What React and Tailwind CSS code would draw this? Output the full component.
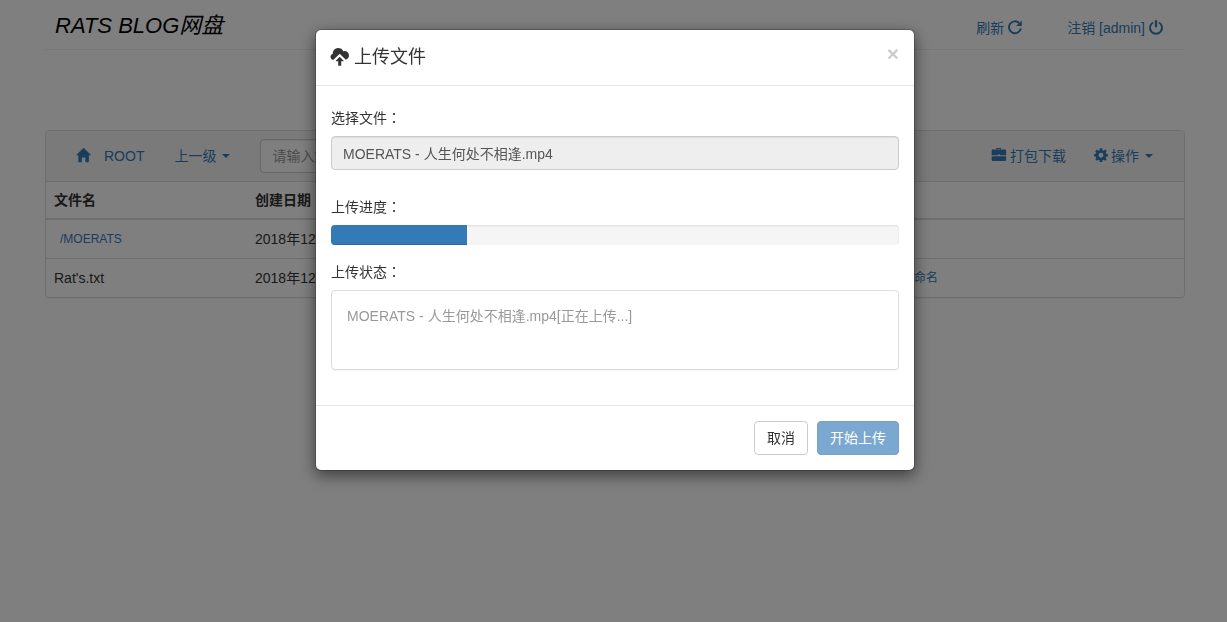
import { useState } from 'react'

const glyphs = {
  home: <path d="M18 618l620 608q8 7 18.5 7t17.5 -7l608 -608q8 -8 5.5 -13t-12.5 -5h-175v-575q0 -10 -7.5 -17.5t-17.5 -7.5h-250q-10 0 -17.5 7.5t-7.5 17.5v375h-300v-375q0 -10 -7.5 -17.5t-17.5 -7.5h-250q-10 0 -17.5 7.5t-7.5 17.5v575h-175q-10 0 -12.5 5t5.5 13z" />,
  upload: <path transform="translate(-20 110)" d="M502 1089q110 0 201 -59.5t135 -156.5q43 15 89 15q121 0 206 -86.5t86 -206.5q0 -99 -60 -181t-150 -110l-378 360q-13 16 -31.5 16t-31.5 -16l-381 -365h-9q-79 0 -135.5 57.5t-56.5 136.5q0 69 43 122.5t108 67.5q-2 19 -2 38q0 100 49 184.5t133.5 134t184.5 49.5zM632 467l223 -228q13 -16 8 -27.5t-26 -11.5h-137v-275q0 -10 -7.5 -17.5t-17.5 -7.5h-150q-10 0 -17.5 7.5t-7.5 17.5v275h-137q-21 0 -26 11.5t8 27.5q199 204 223 228q19 19 31.5 19t32.5 -19z" />,
  off: (
    <>
      <path d="M550 1200h100q21 0 35.5 -14.5t14.5 -35.5v-500q0 -21 -14.5 -35.5t-35.5 -14.5h-100q-21 0 -35.5 14.5t-14.5 35.5v500q0 21 14.5 35.5t35.5 14.5z" />
      <path d="M350 1000A515 515 0 1 1 850 1000" fill="none" stroke="currentColor" strokeWidth="165" />
    </>
  ),
  repeat: (
    <>
      <path d="M950 960A510 510 0 1 1 1100 500" fill="none" stroke="currentColor" strokeWidth="165" />
      <path d="M1175 1180v-450q0 -25 -25 -25h-450z" />
    </>
  ),
  briefcase: (
    <g transform="translate(-30 80)">
      <path d="M380 1000v80q0 50 50 50h340q50 0 50 -50v-80h-100v40h-240v-40z" />
      <path d="M100 1010h1040q100 0 100 -100v-390h-540v40q0 40 -40 40h-80q-40 0 -40 -40v-40h-540v390q0 100 100 100z" />
      <path d="M0 430h1240v-310q0 -100 -100 -100h-1040q-100 0 -100 100z" />
    </g>
  ),
  cog: (
    <path
      fillRule="evenodd"
      d="M500 1185h200l30 -155l95 -40l130 90l135 -135l-88 -130l40 -95l150 -28v-190l-150 -28l-40 -95l88 -130l-135 -135l-130 90l-95 -40l-30 -155h-200l-30 155l-95 40l-130 -90l-135 135l88 130l-40 95l-150 28v190l150 28l40 95l-88 130l135 135l130 -90l95 40zM600 812a212 212 0 1 1 0 -424a212 212 0 1 1 0 424z"
    />
  ),
}

function Glyph({ name, className = 'size-[14px]' }) {
  return (
    <svg viewBox="0 0 1200 1200" fill="currentColor" aria-hidden="true" className={`inline-block shrink-0 overflow-visible ${className}`}>
      <g transform="translate(0 1130) scale(1 -1)">{glyphs[name]}</g>
    </svg>
  )
}

const Caret = () => (
  <span className="inline-block border-x-4 border-t-4 border-x-transparent border-t-current" />
)

const linkCls = 'flex items-center text-[#337ab7] hover:underline'
const labelCls = 'block h-5 leading-5 mb-2'
const rowBtn = 'px-[6px] text-[12px] leading-[22px] text-[#337ab7] align-top hover:underline'
const btnCls = 'h-[34px] px-3 rounded-[4px] border leading-5'

// The centred full-width colon comes from the traditional face
const Colon = () => <span className="font-['Noto_Sans_CJK_TC',sans-serif] leading-none">：</span>

const files = [
  { name: '/MOERATS', dir: true, date: '2018年12月19日', size: '' },
  { name: "Rat's.txt", dir: false, date: '2018年12月19日', size: '1 KB' },
]

function FileTable() {
  return (
    <table className="w-full table-fixed border-separate border-spacing-0 text-left">
      <thead>
        <tr className="leading-5">
          <th className="w-[201px] p-2 border-b-2 border-[#ddd] font-bold">文件名</th>
          <th className="w-[300px] p-2 border-b-2 border-[#ddd] font-bold">创建日期</th>
          <th className="w-[269px] p-2 border-b-2 border-[#ddd] font-bold">大小</th>
          <th className="p-2 border-b-2 border-[#ddd] font-bold" aria-label="操作" />
        </tr>
      </thead>
      <tbody>
        {files.map((f, i) => {
          const cell = i > 0 ? 'p-2 leading-[22px] border-t border-[#ddd]' : 'p-2 leading-[22px]'
          return (
            <tr key={f.name}>
              <td className={cell}>
                {f.dir ? <button type="button" className={rowBtn}>{f.name}</button> : f.name}
              </td>
              <td className={cell}>{f.date}</td>
              <td className={cell}>{f.size}</td>
              <td className={cell}>
                {!f.dir && (
                  <div className="flex">
                    <button type="button" className={rowBtn}>下载</button>
                    <button type="button" className={rowBtn}>删除</button>
                    <button type="button" className={rowBtn}>重命名</button>
                  </div>
                )}
              </td>
            </tr>
          )
        })}
      </tbody>
    </table>
  )
}

function UploadModal({ progress, onClose }) {
  const filename = 'MOERATS - 人生何处不相逢.mp4'
  return (
    <div className="fixed inset-0 overflow-y-auto bg-black/50 pl-[3px] pt-[29px]">
      <div
        role="dialog"
        aria-labelledby="upload-title"
        className="mx-auto w-full max-w-[600px] rounded-[6px] border border-black/20 bg-white bg-clip-padding shadow-[0_5px_15px_rgba(0,0,0,0.5)]"
      >
        <div className="flex items-start justify-between border-b border-[#e5e5e5] p-[15px]">
          <h4 id="upload-title" className="flex items-center gap-[5px] text-[18px] leading-[25px]">
            <Glyph name="upload" className="size-[18px]" />
            上传文件
          </h4>
          <button type="button" aria-label="关闭" onClick={onClose}
            className="-mt-0.5 text-[21px] font-bold leading-[21px] text-black opacity-20">
            ×
          </button>
        </div>

        <div className="px-[15px] pt-[22px] pb-[35px]">
          <label htmlFor="file" className={labelCls}>选择文件<Colon /></label>
          <input id="file" readOnly value={filename}
            className="block h-[34px] w-full rounded-[4px] border border-[#ccc] bg-[#eee] px-[11px] text-[#555] shadow-[inset_0_1px_1px_rgba(0,0,0,0.075)]" />

          <p id="progress-label" className={`${labelCls} mt-[27px]`}>上传进度<Colon /></p>
          <div role="progressbar" aria-labelledby="progress-label" aria-valuenow={progress}
            className="h-5 overflow-hidden rounded-[4px] bg-[#f5f5f5] shadow-[inset_0_1px_2px_rgba(0,0,0,0.1)]">
            <div className="h-full bg-[#337ab7] shadow-[inset_0_-1px_0_rgba(0,0,0,0.15)]" style={{ width: `${progress}%` }} />
          </div>

          <p className={`${labelCls} mt-[17px]`}>上传状态<Colon /></p>
          <div className="min-h-20 rounded-[4px] border border-[#ddd] p-[15px] leading-5 text-[#999] shadow-[0_1px_1px_rgba(0,0,0,0.05)]">
            {filename}[正在上传...]
          </div>
        </div>

        <div className="flex justify-end gap-[9px] border-t border-[#e5e5e5] p-[15px]">
          <button type="button" onClick={onClose} className={`${btnCls} border-[#ccc] bg-white text-[#333]`}>取消</button>
          <button type="button" disabled className={`${btnCls} border-[#2e6da4] bg-[#337ab7] text-white opacity-65`}>开始上传</button>
        </div>
      </div>
    </div>
  )
}

export default function App() {
  const [open, setOpen] = useState(true)

  return (
    <div className="min-h-screen bg-white pl-[3px] font-['Liberation_Sans','Noto_Sans_CJK_SC',sans-serif] text-[14px] leading-5 text-[#333]">
      <div className="mx-auto max-w-[1140px]">
        <header className="flex h-[50px] items-center justify-between border-b border-[#eee] pl-[10px] pr-[22px] pt-[2px]">
          <h1 className="text-[22px] italic text-black">RATS BLOG网盘</h1>
          <nav className="flex gap-[45px] pt-[5px]">
            <a href="#refresh" className={`${linkCls} gap-1`}>刷新<Glyph name="repeat" /></a>
            <a href="#logout" className={`${linkCls} gap-1`}>注销 [admin]<Glyph name="off" /></a>
          </nav>
        </header>

        <main className="mt-20 overflow-hidden rounded-[4px] border border-[#ddd] shadow-[0_1px_1px_rgba(0,0,0,0.05)]">
          <div className="flex h-[51px] items-center border-b border-[#ddd] bg-[#f5f5f5] px-[30px]">
            <a href="#root" className={`${linkCls} gap-[14px]`}><Glyph name="home" />ROOT</a>
            <button type="button" className={`${linkCls} ml-[30px] gap-[6px]`}>上一级<Caret /></button>
            <input type="text" placeholder="请输入文件名" aria-label="请输入文件名"
              className="ml-[30px] h-[34px] w-[200px] rounded-[4px] border border-[#ccc] bg-white px-[11px] placeholder:text-[#999] shadow-[inset_0_1px_1px_rgba(0,0,0,0.075)]" />
            <a href="#pack" className={`${linkCls} ml-auto gap-1`}><Glyph name="briefcase" />打包下载</a>
            <button type="button" className={`${linkCls} ml-[28px] mr-px gap-[3px]`}>
              <Glyph name="cog" />操作<span className="ml-[3px] flex"><Caret /></span>
            </button>
          </div>
          <FileTable />
        </main>
      </div>

      {open && <UploadModal progress={24} onClose={() => setOpen(false)} />}
    </div>
  )
}
